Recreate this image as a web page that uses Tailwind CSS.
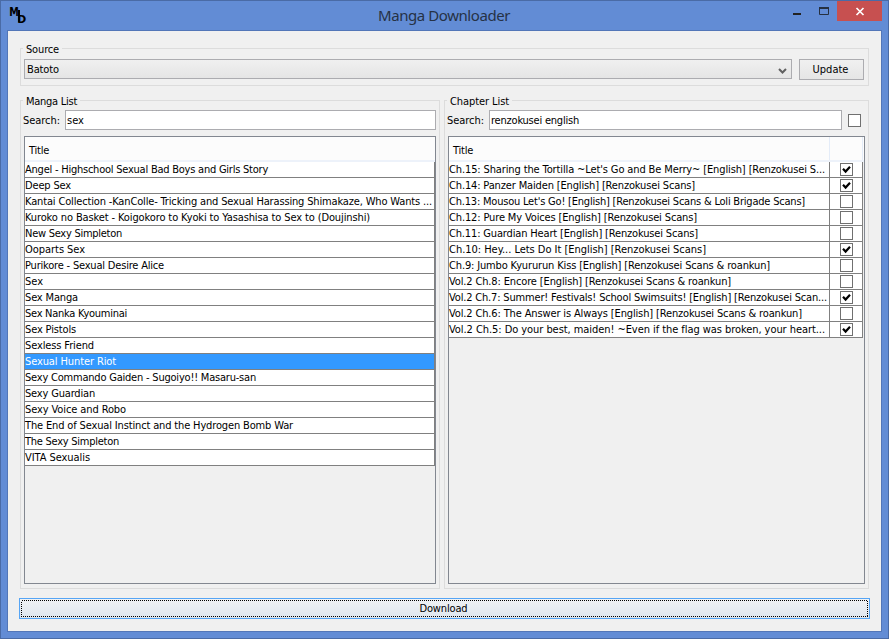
<!DOCTYPE html>
<html lang="en">
<head>
<meta charset="utf-8">
<title>Manga Downloader</title>
<script src="https://cdn.jsdelivr.net/npm/@tailwindcss/browser@4"></script>
</head>
<body class="h-[639px] w-[889px] overflow-hidden">
<div class="flex h-[639px] w-[889px] flex-col border border-[#4a6ba6] bg-[#628cd5] px-[6px] pb-[6px] font-['DejaVu_Sans_Condensed','Noto_Sans',sans-serif] text-[11px] leading-[15px] text-black">
  <header class="flex h-[29px] shrink-0 items-start">
    <svg class="mt-[4px] ml-[1px] shrink-0" width="20" height="20" viewBox="0 0 20 20" font-family="DejaVu Sans, sans-serif" font-weight="bold" fill="#000">
      <text x="1.2" y="11" font-size="12" textLength="9.6" lengthAdjust="spacingAndGlyphs">M</text>
      <text x="9.2" y="17.8" font-size="11" textLength="9" lengthAdjust="spacingAndGlyphs">D</text>
      <path d="M10 5h2v12h-2z"/>
    </svg>
    <h1 class="ml-[350px] mt-[4px] whitespace-nowrap font-['Noto_Sans',sans-serif] text-[15px] leading-[20px] text-[#263245]"><span data-w="132" data-font="15px 'Noto Sans'">Manga Downloader</span></h1>
    <div class="ml-auto flex h-[20px]">
      <svg class="mr-px -ml-px" width="45" height="20" viewBox="0 0 45 20"><path d="M2 12h8v2H2z" fill="#222"/><path d="M28.5 6.5h9v7h-9z" fill="none" stroke="#263040"/><path d="M28 6h10v2H28z" fill="#263040"/></svg>
      <div class="flex h-[20px] w-[45px] items-center justify-center bg-[#c75050]">
        <svg width="45" height="20" viewBox="0 0 45 20"><path d="M19.5 7l7 7M26.5 7l-7 7" stroke="#fff" stroke-width="1.7"/></svg>
      </div>
    </div>
  </header>

  <main class="flex h-[602px] w-[875px] shrink-0 flex-col border border-[#5276b8] bg-[#f0f0f0] px-[11px] pt-[12px]">
    <fieldset class="ml-[1px] h-[43px] w-[849px] border border-[#dcdcdc] px-[3px]">
      <legend class="ml-[-1px] h-[11px] px-[3px] leading-[14px]"><span data-w="33">Source</span></legend>
      <div class="mt-[5px] flex h-[21px] gap-[7px]">
        <div class="flex h-[20px] w-[768px] items-center justify-between border border-[#acacb0] bg-linear-to-b from-[#f0f0f0] to-[#e5e5e5] pl-[2px] pr-[4px]">
          <span data-w="32">Batoto</span>
          <svg class="mt-[5px]" width="9" height="7" viewBox="0 0 9 7"><path d="M1 1l3.5 3.5L8 1" fill="none" stroke="#606060" stroke-width="2"/></svg>
        </div>
        <button class="h-[21px] w-[65px] border border-[#acacb0] bg-linear-to-b from-[#f0f0f0] to-[#e5e5e5] pr-[2px] leading-[19px]"><span data-w="36">Update</span></button>
      </div>
    </fieldset>

    <div class="ml-[1px] mt-[9px] flex gap-[4px]">
      <fieldset class="h-[494px] w-[420px] border border-[#dcdcdc] pl-[2px] pr-[3px]">
        <legend class="h-[11px] px-[3px] leading-[14px]"><span data-w="51">Manga List</span></legend>
        <div class="mt-[4px] flex h-[20px] items-center">
          <label class="w-[42px]"><span data-w="37">Search:</span></label>
          <div class="h-[20px] w-[371px] border border-[#acacb0] bg-white pl-[1px] leading-[19px]"><span data-w="17">sex</span></div>
        </div>
        <div class="ml-[1px] mt-[6px] h-[448px] w-[412px] border border-[#828790]">
          <div class="h-[25px] border-b-2 border-[#edf2fa] bg-[#fcfcfc] pl-[4px] pt-[6px]"><span data-w="20">Title</span></div>
          <div id="manga"></div>
        </div>
      </fieldset>

      <fieldset class="h-[494px] w-[425px] border border-[#dcdcdc] pl-[2px] pr-[3px]">
        <legend class="h-[11px] px-[3px] leading-[14px]"><span data-w="59">Chapter List</span></legend>
        <div class="mt-[4px] flex h-[20px] items-center">
          <label class="w-[42px]"><span data-w="37">Search:</span></label>
          <div class="h-[20px] w-[353px] border border-[#acacb0] bg-white pl-[1px] leading-[19px]"><span data-w="88">renzokusei english</span></div>
          <div class="ml-[6px] h-[13px] w-[13px] border border-[#707070] bg-white"></div>
        </div>
        <div class="ml-[1px] mt-[6px] h-[448px] w-[417px] border border-[#828790]">
          <div class="flex h-[25px] border-b-2 border-[#edf2fa] bg-[#fcfcfc]">
            <div class="w-[381px] border-r border-[#e4ecf8] pl-[4px] pt-[6px]"><span data-w="20">Title</span></div>
            <div class="w-[33px] border-r border-[#e4ecf8]"></div>
          </div>
          <div id="chapters"></div>
        </div>
      </fieldset>
    </div>

    <button class="mt-[9px] h-[21px] w-[851px] shrink-0 border border-[#56a5f5] bg-linear-to-b from-[#f0f2f5] to-[#dfe6ee] p-[1px]">
      <svg class="absolute" width="847" height="17"><rect x=".5" y=".5" width="846" height="16" fill="none" stroke="#000" stroke-dasharray="1 1" shape-rendering="crispEdges"/></svg>
      <span class="block pr-[2px] leading-[17px]"><span data-w="48">Download</span></span>
    </button>
  </main>
</div>
<script>
const manga = [
  ["Angel - Highschool Sexual Bad Boys and Girls Story", 243],
  ["Deep Sex", 46],
  ["Kantai Collection -KanColle- Tricking and Sexual Harassing Shimakaze, Who Wants ...", 407],
  ["Kuroko no Basket - Koigokoro to Kyoki to Yasashisa to Sex to (Doujinshi)", 345],
  ["New Sexy Simpleton", 97],
  ["Ooparts Sex", 60],
  ["Purikore - Sexual Desire Alice", 139],
  ["Sex", 18],
  ["Sex Manga", 53],
  ["Sex Nanka Kyouminai", 102],
  ["Sex Pistols", 51],
  ["Sexless Friend", 69],
  ["Sexual Hunter Riot", 91, true],
  ["Sexy Commando Gaiden - Sugoiyo!! Masaru-san", 231],
  ["Sexy Guardian", 70],
  ["Sexy Voice and Robo", 101],
  ["The End of Sexual Instinct and the Hydrogen Bomb War", 268],
  ["The Sexy Simpleton", 94],
  ["VITA Sexualis", 65]
];
const chapters = [
  ["Ch.15: Sharing the Tortilla ~Let's Go and Be Merry~ [English] [Renzokusei S...", 376, true],
  ["Ch.14: Panzer Maiden [English] [Renzokusei Scans]", 246, true],
  ["Ch.13: Mousou Let's Go! [English] [Renzokusei Scans & Loli Brigade Scans]", 356],
  ["Ch.12: Pure My Voices [English] [Renzokusei Scans]", 248],
  ["Ch.11: Guardian Heart [English] [Renzokusei Scans]", 249],
  ["Ch.10: Hey... Lets Do It [English] [Renzokusei Scans]", 257, true],
  ["Ch.9: Jumbo Kyururun Kiss [English] [Renzokusei Scans & roankun]", 321],
  ["Vol.2 Ch.8: Encore [English] [Renzokusei Scans & roankun]", 282],
  ["Vol.2 Ch.7: Summer! Festivals! School Swimsuits! [English] [Renzokusei Scan...", 378, true],
  ["Vol.2 Ch.6: The Answer is Always [English] [Renzokusei Scans & roankun]", 353],
  ["Vol.2 Ch.5: Do your best, maiden! ~Even if the flag was broken, your heart...", 376, true]
];
const esc = s => s.replace(/&/g, "&amp;");
document.getElementById("manga").innerHTML = manga.map(([t, w, sel]) =>
  `<div class="h-[16px] w-[410px] whitespace-nowrap border-b border-r border-[#808080] leading-[15px] ${sel ? "bg-[#3399ff] text-white" : "bg-white"}"><span data-w="${w}">${esc(t)}</span></div>`).join("");
const tick = `<svg width="11" height="11" viewBox="0 0 11 11"><path d="M2 4.8l2.6 2.8L9 2.8" fill="none" stroke="#000" stroke-width="2.2"/></svg>`;
document.getElementById("chapters").innerHTML = chapters.map(([t, w, on]) =>
  `<div class="flex h-[16px] w-[414px] whitespace-nowrap border-b border-[#808080] bg-white leading-[15px]"><div class="w-[381px] border-r border-[#808080]"><span data-w="${w}">${esc(t)}</span></div><div class="flex w-[33px] justify-center border-r border-[#808080] pt-[1px]"><div class="h-[13px] w-[13px] border border-[#707070] bg-white">${on ? tick : ""}</div></div></div>`).join("");
// Spread each label to its column metrics
const ctx = document.createElement("canvas").getContext("2d");
document.querySelectorAll("[data-w]").forEach(e => {
  ctx.font = e.dataset.font || "11px 'DejaVu Sans Condensed', 'Noto Sans'";
  const gap = (e.dataset.w - ctx.measureText(e.textContent).width) / e.textContent.length;
  e.style.letterSpacing = gap.toFixed(3) + "px";
});
</script>
</body>
</html>
